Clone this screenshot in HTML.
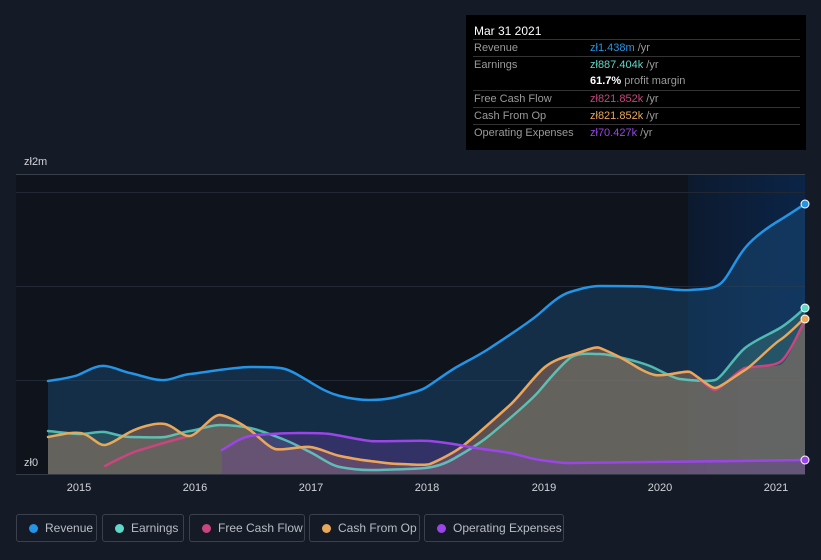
<!DOCTYPE html>
<html><head><style>
html,body{margin:0;width:821px;height:560px;background:#151b26;font-family:"Liberation Sans",sans-serif;overflow:hidden;position:relative}
.tt{position:absolute;left:466px;top:15px;width:340px;height:135px;background:#000;color:#fff;font-size:11px}
.tt .h{position:absolute;left:8px;top:9px;font-size:12px}
.row{position:absolute;left:7px;width:327px;height:17px;border-top:1px solid #333;line-height:17px}
.row .l{position:absolute;left:1px;color:#9a9a9a}
.row .v{position:absolute;left:117px;color:#9a9a9a}
.leg{position:absolute;top:514px;height:28px;border:1px solid #3a404c;border-radius:3px;color:#b8bcc4;font-size:12px;line-height:26px;box-sizing:border-box;white-space:nowrap}
.leg i{position:absolute;left:12px;top:9px;width:9px;height:9px;border-radius:50%}
.leg span{position:absolute;left:28px}
</style></head><body>
<svg width="821" height="560" style="position:absolute;left:0;top:0">
<defs>
<linearGradient id="fg" x1="0" x2="1"><stop offset="0" stop-color="#0c1a2e"/><stop offset="1" stop-color="#0b2447"/></linearGradient>
</defs>
<rect x="16" y="174" width="672" height="300" fill="#0f131b"/>
<rect x="688" y="174" width="117" height="300" fill="url(#fg)"/>
<line x1="16" y1="174.5" x2="805" y2="174.5" stroke="#3a404a"/>
<line x1="16" y1="192.5" x2="805" y2="192.5" stroke="#222833"/>
<line x1="16" y1="286.5" x2="805" y2="286.5" stroke="#222833"/>
<line x1="16" y1="380.5" x2="805" y2="380.5" stroke="#222833"/>
<line x1="16" y1="474.5" x2="805" y2="474.5" stroke="#333a45"/>
<text x="24" y="165" fill="#d0d3d8" font-size="11">zł2m</text>
<text x="24" y="466" fill="#d0d3d8" font-size="11">zł0</text>
<g fill="#d0d3d8" font-size="11" text-anchor="middle">
<text x="79" y="491">2015</text><text x="195" y="491">2016</text><text x="311" y="491">2017</text><text x="427" y="491">2018</text><text x="544" y="491">2019</text><text x="660" y="491">2020</text><text x="776" y="491">2021</text></g>
<path d="M48,381 C60,379 70,378 78,375 S95,365 105,366 S120,371 130,373 S155,381 165,380 S180,375 190,374 S235,367 250,367 S278,367 285,369 S300,376 310,382 S328,393 340,396 S360,400 370,400 S390,399 400,396 S418,392 425,388 S445,374 455,368 S478,356 490,348 S530,322 540,313 S560,295 570,292 S590,286 600,286 S640,286 650,287 S680,291 690,290 S712,290 720,284 S735,260 745,248 S770,226 780,220 S800,207 805,204 L805,474 L48,474Z" fill="#1a4f7e" fill-opacity="0.45"/>
<path d="M48,431 C60,432 70,434 80,434 S98,431 105,432 S122,437 130,437 S158,438 165,437 S182,432 190,431 S210,425 220,425 S240,426 250,428 S275,436 285,440 S300,447 310,452 S330,465 340,467 S360,470 370,470 S415,469 425,468 S445,464 455,458 S478,445 490,435 S530,402 540,390 S562,364 570,358 S590,354 600,354 S640,362 650,366 S672,378 680,379 S708,382 715,380 S735,356 745,348 S770,334 780,328 S800,312 805,308 L805,474 L48,474Z" fill="#4a8c80" fill-opacity="0.35"/>
<path d="M48,437 C60,435 70,432 80,433 S98,446 105,445 S122,436 130,432 S155,422 165,424 S182,437 190,436 S212,414 220,415 S242,424 250,430 S268,447 275,449 S300,446 310,447 S330,454 340,456 S360,460 370,461 S390,464 400,464 S425,466 430,464 S450,455 460,448 S500,414 510,405 S535,375 545,367 S565,357 575,354 S595,346 600,348 S618,356 625,360 S645,373 655,375 S685,370 690,372 S710,390 715,390 S738,374 745,370 S772,367 780,365 S800,330 805,320 L805,474 L48,474Z" fill="#b07a60" fill-opacity="0.45"/>
<path d="M222,450 C232,444 240,438 250,436 S290,433 300,433 S322,433 330,434 S360,440 370,441 S420,440 430,441 S460,445 470,447 S500,451 510,453 S532,459 540,460 S560,463 570,463 S640,462 650,462 S730,461 740,461 S800,460 805,460 L805,474 L222,474Z" fill="#6a3aa0" fill-opacity="0.35"/>
<g fill="none" stroke-width="2.5" stroke-linecap="round">
<path d="M48,381 C60,379 70,378 78,375 S95,365 105,366 S120,371 130,373 S155,381 165,380 S180,375 190,374 S235,367 250,367 S278,367 285,369 S300,376 310,382 S328,393 340,396 S360,400 370,400 S390,399 400,396 S418,392 425,388 S445,374 455,368 S478,356 490,348 S530,322 540,313 S560,295 570,292 S590,286 600,286 S640,286 650,287 S680,291 690,290 S712,290 720,284 S735,260 745,248 S770,226 780,220 S800,207 805,204" stroke="#2394e6"/>
<path d="M48,431 C60,432 70,434 80,434 S98,431 105,432 S122,437 130,437 S158,438 165,437 S182,432 190,431 S210,425 220,425 S240,426 250,428 S275,436 285,440 S300,447 310,452 S330,465 340,467 S360,470 370,470 S415,469 425,468 S445,464 455,458 S478,445 490,435 S530,402 540,390 S562,364 570,358 S590,354 600,354 S640,362 650,366 S672,378 680,379 S708,382 715,380 S735,356 745,348 S770,334 780,328 S800,312 805,308" stroke="#5fd8c8" stroke-opacity="0.8"/>
<path d="M105,466 C120,458 130,453 140,450 S180,438 190,436 S212,414 220,415 S242,424 250,430 S268,447 275,449 S300,446 310,447 S330,454 340,456 S360,460 370,461 S390,464 400,464 S425,466 430,464 S450,455 460,448 S500,414 510,405 S535,375 545,367 S565,357 575,354 S595,346 600,348 S618,356 625,360 S645,373 655,375 S685,370 690,372 S710,390 715,390 S738,370 745,368 S772,367 780,362 S800,330 805,320" stroke="#c8457e"/>
<path d="M48,437 C60,435 70,432 80,433 S98,446 105,445 S122,436 130,432 S155,422 165,424 S182,437 190,436 S212,414 220,415 S242,424 250,430 S268,447 275,449 S300,446 310,447 S330,454 340,456 S360,460 370,461 S390,464 400,464 S425,466 430,464 S450,455 460,448 S500,414 510,405 S535,375 545,367 S565,357 575,354 S595,346 600,348 S618,356 625,360 S645,373 655,375 S685,370 690,372 S710,388 715,388 S738,374 745,370 S772,345 780,340 S800,322 805,318" stroke="#e8a85a"/>
<path d="M222,450 C232,444 240,438 250,436 S290,433 300,433 S322,433 330,434 S360,440 370,441 S420,440 430,441 S460,445 470,447 S500,451 510,453 S532,459 540,460 S560,463 570,463 S640,462 650,462 S730,461 740,461 S800,460 805,460" stroke="#9b45e8"/>
</g>
<circle cx="805" cy="204" r="4" fill="#2394e6" stroke="#fff" stroke-width="1"/>
<circle cx="805" cy="308" r="4" fill="#5fd8c8" stroke="#fff" stroke-width="1"/>
<circle cx="805" cy="319" r="4" fill="#e8a85a" stroke="#fff" stroke-width="1"/>
<circle cx="805" cy="460" r="4" fill="#9b45e8" stroke="#fff" stroke-width="1"/>
</svg>
<div class="tt">
<div class="h">Mar 31 2021</div>
<div class="row" style="top:24px"><span class="l">Revenue</span><span class="v"><b style="font-weight:normal;color:#2394e6">zł1.438m</b> /yr</span></div>
<div class="row" style="top:41px"><span class="l">Earnings</span><span class="v"><b style="font-weight:normal;color:#5fd8c8">zł887.404k</b> /yr</span></div>
<div class="row" style="top:58px;border-top:none"><span class="v"><b style="color:#fff">61.7%</b> profit margin</span></div>
<div class="row" style="top:75px"><span class="l">Free Cash Flow</span><span class="v"><b style="font-weight:normal;color:#c8457e">zł821.852k</b> /yr</span></div>
<div class="row" style="top:92px"><span class="l">Cash From Op</span><span class="v"><b style="font-weight:normal;color:#e8a85a">zł821.852k</b> /yr</span></div>
<div class="row" style="top:109px"><span class="l">Operating Expenses</span><span class="v"><b style="font-weight:normal;color:#9b45e8">zł70.427k</b> /yr</span></div>
</div>
<div class="leg" style="left:16px;width:81px"><i style="background:#2394e6"></i><span>Revenue</span></div>
<div class="leg" style="left:102px;width:82px"><i style="background:#5fd8c8"></i><span>Earnings</span></div>
<div class="leg" style="left:189px;width:116px"><i style="background:#c8457e"></i><span>Free Cash Flow</span></div>
<div class="leg" style="left:309px;width:111px"><i style="background:#e8a85a"></i><span>Cash From Op</span></div>
<div class="leg" style="left:424px;width:140px"><i style="background:#9b45e8"></i><span>Operating Expenses</span></div>
</body></html>
